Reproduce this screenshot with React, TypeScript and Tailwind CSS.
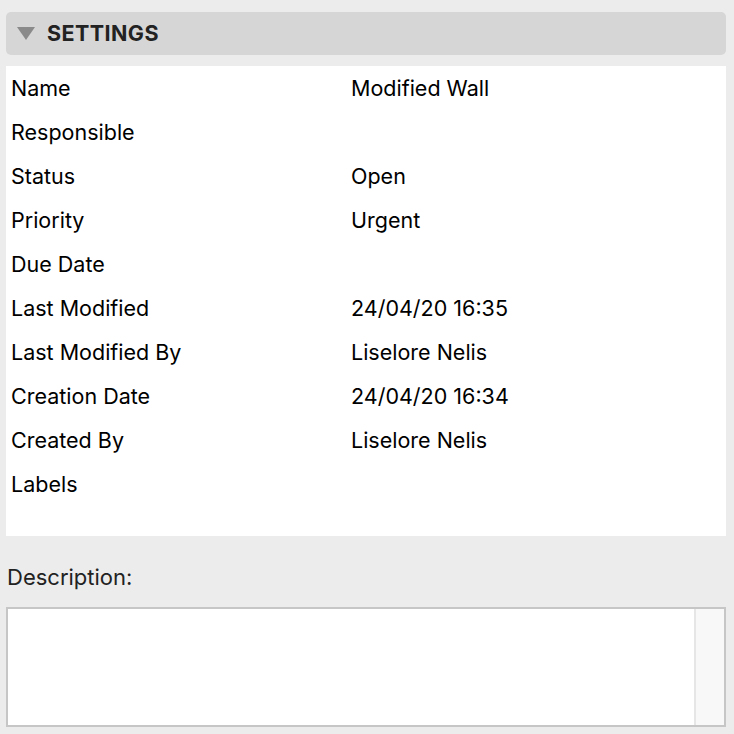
const rows: [string, string][] = [
  ["Name", "Modified Wall"],
  ["Responsible", ""],
  ["Status", "Open"],
  ["Priority", "Urgent"],
  ["Due Date", ""],
  ["Last Modified", "24/04/20 16:35"],
  ["Last Modified By", "Liselore Nelis"],
  ["Creation Date", "24/04/20 16:34"],
  ["Created By", "Liselore Nelis"],
  ["Labels", ""],
]

export default function App() {
  return (
    <div
      className="w-[734px] h-[734px] bg-[#ececec] pt-[12px] pl-[6px] pr-[8px] overflow-hidden"
      style={{ fontFamily: "Inter, 'Liberation Sans', sans-serif" }}
    >
      <div className="h-[43px] rounded-[5px] bg-[#d6d6d6] flex items-center pl-[11px] gap-[12px]">
        <svg width="18" height="13" viewBox="0 0 18 13">
          <polygon points="0,0 18,0 9,13" fill="#8a8a8a" />
        </svg>
        <span className="text-[21.5px] font-bold text-[#222] tracking-[0.02em]">SETTINGS</span>
      </div>

      <div className="mt-[11px] bg-white h-[470px]">
        {rows.map(([label, value]) => (
          <div key={label} className="h-[44px] flex items-center text-[21.5px] text-black">
            <div className="w-[345px] pl-[5px]">{label}</div>
            <div>{value}</div>
          </div>
        ))}
      </div>

      <div className="mt-[27px] pl-[1px] text-[22px] leading-[28px] text-[#222]">Description:</div>

      <div className="mt-[16px] h-[120px] border-2 border-[#c6c6c6] bg-white flex justify-end">
        <div className="w-[30px] h-full bg-[#f8f8f8] border-l-2 border-[#e6e6e6]" />
      </div>
    </div>
  )
}
